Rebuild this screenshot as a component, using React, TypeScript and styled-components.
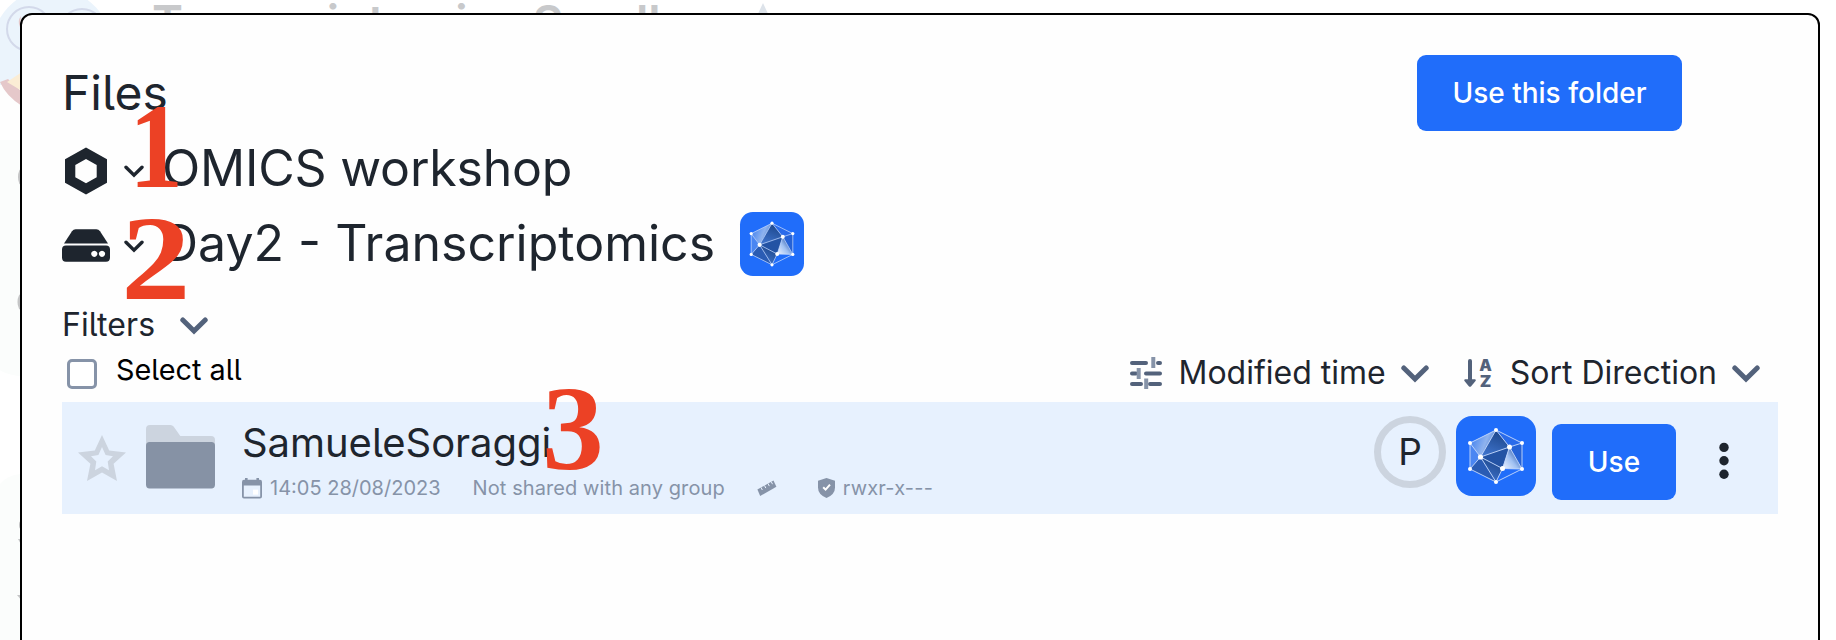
import React from "react";
import styled, { createGlobalStyle } from "styled-components";

const ink = "#1e252e";
const slate = "#53627b";
const muted = "#8693a8";
const blue = "#206dfa";

const Global = createGlobalStyle`
  * { box-sizing: border-box; }
  html, body { margin: 0; background: #fff; overflow: hidden; }
  body { font-family: Inter, "Liberation Sans", sans-serif; font-feature-settings: "cv05"; color: ${ink}; }
  svg { display: block; flex: none; }
`;

const Stage = styled.div`
  position: relative;
  width: 1836px;
  height: 640px;
  overflow: hidden;
  padding: 13px 16px 0 20px;
  background: #fff;
`;
const BackTitle = styled.div`
  position: absolute;
  left: 152px;
  top: -4px;
  font-size: 47px;
  line-height: 52px;
  font-weight: 600;
  color: #c8c9cb;
  white-space: nowrap;
  font-feature-settings: normal;
`;
const BackArt = styled.svg`
  position: absolute;
  left: 0;
  top: 0;
`;
const Dialog = styled.main`
  position: relative;
  height: 660px;
  border: 2px solid #000;
  border-radius: 12px;
  background: #fefefe;
  padding: 40px 40px 0 40px;
`;
const Header = styled.header`
  display: flex;
  justify-content: space-between;
  height: 76px;
  padding-right: 96px;
`;
const Title = styled.h1`
  margin: 0;
  font-size: 48px;
  line-height: 75px;
  font-weight: 400;
`;
const Button = styled.button<{ $w: number }>`
  width: ${(p) => p.$w}px;
  height: 76px;
  flex: none;
  border: 0;
  border-radius: 9px;
  background: ${blue};
  color: #fff;
  font: 500 28px/76px Inter, sans-serif;
  padding: 0;
`;
const Crumb = styled.div<{ $tracking?: number }>`
  display: flex;
  align-items: center;
  height: 75px;
  font-size: 50px;
  letter-spacing: ${(p) => p.$tracking ?? 0}px;
  white-space: nowrap;
`;
const CrumbIcon = styled.span`
  display: flex;
  justify-content: center;
  width: 48px;
  margin: 4px 14px 0 0;
`;
const CrumbText = styled.span`
  margin: -2px 25px 0 18px;
`;
const Filters = styled.div`
  display: flex;
  align-items: center;
  gap: 25px;
  height: 50px;
  margin-top: 18px;
  font-size: 32px;
  letter-spacing: 0.1px;
`;
const Tools = styled.div`
  display: flex;
  height: 53px;
  padding-right: 18px;
`;
const SelectAll = styled.label`
  display: flex;
  gap: 19px;
  padding-left: 5px;
  color: #000;
  font-size: 28.8px;
  line-height: 42px;
  flex: 1;
`;
const Check = styled.span`
  width: 30px;
  height: 30px;
  margin-top: 10px;
  border: 3px solid ${muted};
  border-radius: 5px;
  background: #fff;
`;
const Sort = styled.div`
  display: flex;
  align-items: center;
  height: 47px;
  margin-left: 35px;
  font-size: 32px;
  white-space: nowrap;
`;
const SortLabel = styled.span<{ $left?: number }>`
  margin: 0 15px 0 ${(p) => p.$left ?? 16}px;
`;
const ChevronWrap = styled.span`
  margin-top: 3px;
`;
const Row = styled.section`
  display: flex;
  height: 112px;
  background: #e7f1fe;
  padding-left: 16px;
`;
const StarSlot = styled.div`
  margin: 33px 20px 0 0;
`;
const FolderSlot = styled.div`
  margin-top: 23px;
`;
const Info = styled.div`
  flex: 1;
  margin-left: 27px;
`;
const Name = styled.div`
  font-size: 40px;
  line-height: 48px;
  margin-top: 17px;
  letter-spacing: -0.05px;
`;
const Meta = styled.div`
  display: flex;
  align-items: center;
  height: 30px;
  margin-top: 6px;
  font-size: 20px;
  color: ${muted};
  white-space: nowrap;
`;
const MetaItem = styled.span<{ $gap: number; $tracking?: number }>`
  display: flex;
  align-items: center;
  gap: 8px;
  margin-right: ${(p) => p.$gap}px;
  letter-spacing: ${(p) => p.$tracking ?? 0}px;
`;
const Avatar = styled.div`
  width: 72px;
  height: 72px;
  margin: 14px 10px 0 0;
  border: 7px solid #ccd4df;
  border-radius: 50%;
  font-size: 37px;
  line-height: 58px;
  text-align: center;
`;
const AppTile = styled.span<{ $size: number; $top?: number }>`
  display: flex;
  flex: none;
  width: ${(p) => p.$size}px;
  height: ${(p) => p.$size}px;
  margin-top: ${(p) => p.$top ?? 0}px;
  border-radius: ${(p) => p.$size * 0.2}px;
  background: ${blue};
`;
const UseSlot = styled.div`
  margin: 22px 43px 0 16px;
`;
const DotsSlot = styled.div`
  margin: 40px 49px 0 0;
`;
const Mark = styled.span<{ $x: number; $y: number; $sx: number }>`
  position: absolute;
  left: ${(p) => p.$x}px;
  top: ${(p) => p.$y}px;
  font: 700 120px/120px "Liberation Serif", serif;
  color: #ec4125;
  transform: scaleX(${(p) => p.$sx});
  transform-origin: 0 0;
`;

const Chevron = () => (
  <ChevronWrap>
    <svg width="28" height="18" viewBox="0 0 28 18" fill="none">
      <path d="M2.8 3L14 14L25.2 3" stroke={slate} strokeWidth="5" strokeLinecap="round" />
    </svg>
  </ChevronWrap>
);
const CrumbChevron = styled.span`
  margin-top: 5px;
`;
const SmallChevron = () => (
  <CrumbChevron>
    <svg width="20" height="13" viewBox="0 0 20 13" fill="none">
      <path d="M2 2.2L10 10.2L18 2.2" stroke={ink} strokeWidth="3.4" strokeLinecap="round" />
    </svg>
  </CrumbChevron>
);
const Hexagon = () => (
  <svg width="42" height="48" viewBox="0 0 42 48">
    <path
      fill={ink} fillRule="evenodd"
      d="M21 0.5L42 12.3V35.7L21 47.5L0 35.7V12.3ZM21 12L10.3 18V30.2L21 36.3L31.7 30.2V18Z"
    />
  </svg>
);
const Drive = () => (
  <svg width="48" height="33" viewBox="0 0 48 33" fill={ink}>
    <path d="M2 14.6L10 2.3Q11.4 0.3 13.6 0.3H34.4Q36.6 0.3 38 2.3L46 14.6Z" />
    <path fillRule="evenodd" d="M4 16.5H44Q48 16.5 48 20.5V28.5Q48 32.7 44 32.7H4Q0 32.7 0 28.5V20.5Q0 16.5 4 16.5ZM32.3 21.7a3.1 3.1 0 1 0 .01 0ZM40 21.7a3.1 3.1 0 1 0 .01 0Z" />
  </svg>
);
const Sliders = () => (
  <svg width="32" height="32" viewBox="0 0 32 32" fill="none">
    <path d="M2 6H16M28 6H30M2 16.5H6M16 16.5H30M2 27H11M20 27H30" stroke={slate} strokeWidth="4" strokeLinecap="round" />
    <path d="M23.3 0V11M8.7 11V22M16.2 21.5V32" stroke={muted} strokeWidth="4" />
  </svg>
);
const SortAZ = () => (
  <svg width="28" height="28" viewBox="0 0 28 28" overflow="visible">
    <path d="M6 2V24" stroke={slate} strokeWidth="4" strokeLinecap="round" />
    <path d="M1 20.2H11Q12.6 20.6 11.5 22L7.2 27.2Q6 28.4 4.8 27.2L0.5 22Q-0.5 20.6 1 20.2Z" fill={slate} />
    <text x="15.2" y="12" fontSize="16" fontWeight="900" fill={slate} textLength="12.6" lengthAdjust="spacingAndGlyphs">A</text>
    <text x="15.7" y="28" fontSize="16" fontWeight="900" fill={slate} textLength="11.6" lengthAdjust="spacingAndGlyphs">Z</text>
  </svg>
);
const Star = () => (
  <svg width="48" height="46" viewBox="0 0 48 46">
    <path
      fill="#ccd4df" fillRule="evenodd"
      d="M24 0L31.2 15.6L48 17.4L35.6 28.8L39 46L24 37.4L9 46L12.4 28.8L0 17.4L16.8 15.6ZM24 12L20.4 20.1L13 21.3L18.3 26.6L17 35.2L24 31.2L31 35.2L29.7 26.6L35 21.3L27.6 20.1Z"
    />
  </svg>
);
const Folder = () => (
  <svg width="69" height="64" viewBox="0 0 69 64">
    <path d="M0 24V4Q0 0 4 0H24.5Q26.4 0 27.6 1.6L34.3 11H65Q69 11 69 15V24Z" fill="#ccd4df" />
    <rect y="17" width="69" height="46.4" rx="3.6" fill="#8692a5" />
  </svg>
);
const Calendar = () => (
  <svg width="20" height="21" viewBox="0 0 20 21">
    <path fill={muted} fillRule="evenodd" d="M3 0H5.6V1.8H14.4V0H17V1.8H18Q20 1.8 20 4V18.6Q20 20.6 18 20.6H2Q0 20.6 0 18.6V4Q0 1.8 2 1.8H3ZM1.8 7.4V18.8H18.2V7.4Z" />
    <rect x="11" y="11.6" width="5" height="5" fill="#fff" />
  </svg>
);
const Ruler = () => (
  <svg width="20" height="17" viewBox="0 0 20 17">
    <path d="M0.4 9.4L16.5 0.6L19.4 6.7L3.2 15.9Z" fill={muted} />
    <path d="M4 7.4L5.3 10M7.5 5.5L8.8 8.1M11 3.5L12.3 6.1M14.3 1.8L15.5 4.2" stroke="#e7f1fe" strokeWidth="1" />
  </svg>
);
const Shield = () => (
  <svg width="17" height="20" viewBox="0 0 17 20">
    <path d="M8.5 0L17 2.7V9.5Q17 16.5 8.5 20Q0 16.5 0 9.5V2.7Z" fill={muted} />
    <path d="M5.2 9.2L7.6 11.6L12 6.6" stroke="#fff" strokeWidth="2" fill="none" />
  </svg>
);
const Dots = () => (
  <svg width="10" height="38" viewBox="0 0 10 38" fill={ink}>
    <circle cx="5" cy="5.4" r="4.7" /><circle cx="5" cy="18.8" r="4.7" /><circle cx="5" cy="32.3" r="4.7" />
  </svg>
);

const Polyhedron = ({ size, id }: { size: number; id: string }) => (
  <svg width={size} height={size} viewBox="0 0 80 80">
    <defs>
      <linearGradient id={id + "a"} x1="0" y1="0.2" x2="1" y2="0.6">
        <stop offset="0" stopColor="#3a7cf0" /><stop offset="0.6" stopColor="#8fb3ee" /><stop offset="1" stopColor="#4478d0" />
      </linearGradient>
      <linearGradient id={id + "b"} x1="0.7" y1="0" x2="0.3" y2="1">
        <stop offset="0" stopColor="#1b4487" /><stop offset="1" stopColor="#3f74cd" />
      </linearGradient>
      <linearGradient id={id + "c"} x1="0" y1="1" x2="0.9" y2="0.2">
        <stop offset="0" stopColor="#f0f5ff" /><stop offset="0.5" stopColor="#9fc0f2" /><stop offset="1" stopColor="#1d4a9b" />
      </linearGradient>
    </defs>
    <path d="M40 14L14 27L24.5 41Z" fill={`url(#${id}a)`} />
    <path d="M14 27L24.5 41L14 53Z" fill="#4a86f2" />
    <path d="M40 14L24.5 41L53.5 31Z" fill={`url(#${id}b)`} />
    <path d="M40 14L66 27L53.5 31Z" fill="#2a6bea" />
    <path d="M24.5 41L53.5 31L46.5 52.5Z" fill="#2353a4" />
    <path d="M24.5 41L14 53L40 66Z" fill="#2a5cb4" />
    <path d="M24.5 41L46.5 52.5L40 66Z" fill={`url(#${id}b)`} />
    <path d="M53.5 31L66 53L46.5 52.5Z" fill={`url(#${id}c)`} />
    <path d="M53.5 31L66 27L66 53Z" fill="#2562d6" />
    <g stroke="#c9dbfb" strokeWidth="0.9" fill="none">
      <path d="M40 14L66 27V53L40 66L14 53V27Z" />
      <path d="M40 14L24.5 41L40 66L46.5 52.5L53.5 31L40 14M14 27L24.5 41L14 53M24.5 41L53.5 31L66 27M24.5 41L46.5 52.5L66 53L53.5 31" />
    </g>
    <g fill="#fff">
      <circle cx="40" cy="14" r="2" /><circle cx="66" cy="27" r="2" /><circle cx="66" cy="53" r="2" />
      <circle cx="40" cy="66" r="2" /><circle cx="14" cy="53" r="2" /><circle cx="14" cy="27" r="2" />
      <circle cx="24.5" cy="41" r="2.6" /><circle cx="53.5" cy="31" r="2.5" /><circle cx="46.5" cy="52.5" r="2.5" />
    </g>
  </svg>
);

const Behind = () => (
  <BackArt width="800" height="640" viewBox="0 0 800 640">
    <path d="M0 140H30V377Q8 376 0 370Z" fill="#fbfdfc" />
    <path d="M0 484Q8 475 20 474H30V640H0Z" fill="#fbfdfc" />
    <ellipse cx="52" cy="54" rx="62" ry="66" fill="#ebf4fc" />
    <path d="M0 80V130H30V80Z" fill="#fefefe" />
    <path d="M0 80L20 70V85H0Z" fill="#ebf4fc" />
    <circle cx="29" cy="29" r="22" fill="none" stroke="#d3d9ea" strokeWidth="2" />
    <circle cx="82" cy="31" r="22" fill="none" stroke="#d3d9ea" strokeWidth="2" />
    <path d="M21 16Q17 21 20 27Z" fill="#e5c8ca" />
    <path d="M0 82L8 79L22 92V106Q6 96 0 82Z" fill="#e5c8ca" />
    <path d="M7 82L22 72V91Z" fill="#fbedd5" />
    <path d="M763 3L770 18H756Z" fill="#dde3ea" />
    <g fill="#c4c5c6">
      <ellipse cx="22" cy="177" rx="4" ry="9" />
      <ellipse cx="22" cy="302" rx="4.5" ry="9" />
      <ellipse cx="21" cy="525" rx="2" ry="4" />
      <path d="M18 539H22V546Z" />
      <path d="M17 595H22V601Z" />
    </g>
  </BackArt>
);

export default function App() {
  return (
    <Stage>
      <Global />
      <Behind />
      <BackTitle>Transcriptomics Sandbox</BackTitle>
      <Dialog>
        <Header>
          <Title>Files</Title>
          <Button $w={265}>Use this folder</Button>
        </Header>
        <Crumb $tracking={-0.2}>
          <CrumbIcon><Hexagon /></CrumbIcon>
          <SmallChevron />
          <CrumbText>OMICS workshop</CrumbText>
        </Crumb>
        <Crumb>
          <CrumbIcon><Drive /></CrumbIcon>
          <SmallChevron />
          <CrumbText>Day2 - Transcriptomics</CrumbText>
          <AppTile $size={64}><Polyhedron size={64} id="crumb" /></AppTile>
        </Crumb>
        <Filters>Filters<Chevron /></Filters>
        <Tools>
          <SelectAll><Check />Select all</SelectAll>
          <Sort><Sliders /><SortLabel>Modified time</SortLabel><Chevron /></Sort>
          <Sort><SortAZ /><SortLabel $left={18}>Sort Direction</SortLabel><Chevron /></Sort>
        </Tools>
        <Row>
          <StarSlot><Star /></StarSlot>
          <FolderSlot><Folder /></FolderSlot>
          <Info>
            <Name>SamueleSoraggi</Name>
            <Meta>
              <MetaItem $gap={32}><Calendar />14:05 28/08/2023</MetaItem>
              <MetaItem $gap={32} $tracking={0.09}>Not shared with any group</MetaItem>
              <MetaItem $gap={41}><Ruler /></MetaItem>
              <MetaItem $gap={0} $tracking={0.2}><Shield />rwxr-x---</MetaItem>
            </Meta>
          </Info>
          <Avatar>P</Avatar>
          <AppTile $size={80} $top={14}><Polyhedron size={80} id="row" /></AppTile>
          <UseSlot><Button $w={124}>Use</Button></UseSlot>
          <DotsSlot><Dots /></DotsSlot>
        </Row>
        <Mark $x={107} $y={72} $sx={0.9}>1</Mark>
        <Mark $x={99} $y={184} $sx={1.16}>2</Mark>
        <Mark $x={520} $y={354} $sx={1.03}>3</Mark>
      </Dialog>
    </Stage>
  );
}
